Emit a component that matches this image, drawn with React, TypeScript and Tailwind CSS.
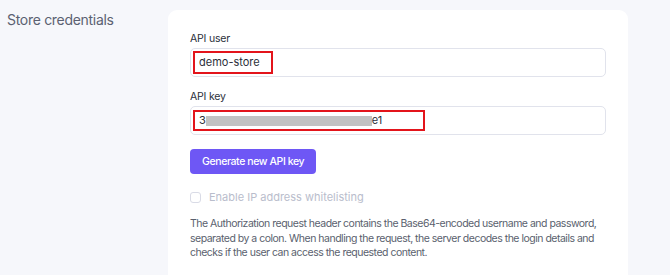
import React from 'react';

const App = () => {
    return (
        <div className="flex h-[275px] w-[670px] overflow-hidden bg-[#f6f7fb] font-['Inter',sans-serif]">
            <div className="w-[168px] flex-shrink-0 pl-[7px] pt-[10px]">
                <h2 className="text-[14px] leading-[20px] tracking-[-0.3px] text-[#5b6171]">Store credentials</h2>
            </div>

            <div className="mt-[10px] w-[460px] rounded-t-[9px] bg-white px-[22px] pt-[22px]">
                <label className="block text-[10.5px] leading-[14px] tracking-[-0.2px] text-[#2b2f3a]">API user</label>
                <div className="mt-[2px] flex h-[29px] items-center rounded-[5px] border border-[#e1e3ec] px-[2px]">
                    <div className="flex h-[23px] w-[80px] items-center border-2 border-[#e3141b] pl-[4px] text-[11px] text-[#2b2f3a]">
                        demo-store
                    </div>
                </div>

                <label className="mt-[13px] block text-[10.5px] leading-[14px] tracking-[-0.2px] text-[#2b2f3a]">API key</label>
                <div className="mt-[2px] flex h-[29px] items-center rounded-[5px] border border-[#e1e3ec] px-[2px]">
                    <div className="flex h-[21px] w-[232px] items-center border-2 border-[#e3141b] pl-[4px] text-[11px] text-[#2b2f3a]">
                        <span>3</span>
                        <span className="h-[10px] w-[166px] bg-[#c2c2c2]" />
                        <span>e1</span>
                    </div>
                </div>

                <button className="mt-[14px] h-[25px] rounded-[4px] bg-[#6e57f5] px-[12px] text-[10.5px] font-medium tracking-[-0.4px] text-white">
                    Generate new API key
                </button>

                <div className="mt-[15px] flex h-[16px] items-center gap-[8px]">
                    <span className="h-[11px] w-[11px] rounded-[3px] border border-[#d9dbe6] bg-white" />
                    <span className="text-[11px] text-[#b9bdcc]">Enable IP address whitelisting</span>
                </div>

                <p className="mt-[12px] text-[10.5px] leading-[14.5px] tracking-[-0.5px] text-[#5a5f6e]">
                    The Authorization request header contains the Base64-encoded username and password, separated by a colon. When handling the request, the server decodes the login details and checks if the user can access the requested content.
                </p>
            </div>
        </div>
    );
};

export default App;
